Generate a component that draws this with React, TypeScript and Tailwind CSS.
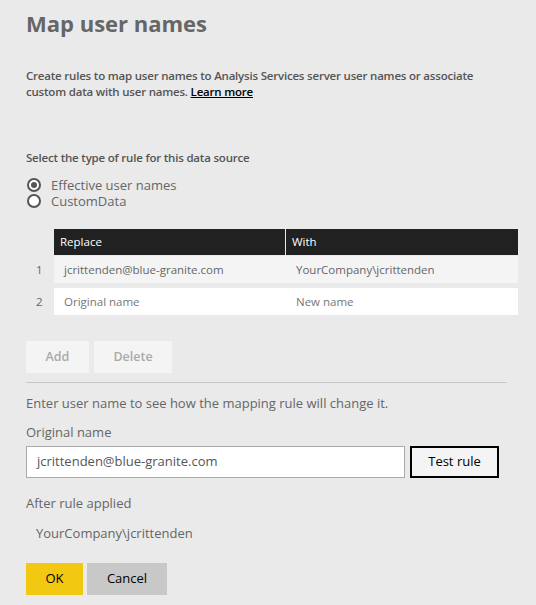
import React from "react";

const font = { fontFamily: '"Segoe UI", "Open Sans", "Noto Sans", sans-serif' };

function Radio({ checked, label }: { checked: boolean; label: string }) {
  return (
    <label className="flex items-center h-4 gap-[10px]">
      <span className="w-[14px] h-[14px] rounded-full border-2 border-[#555] bg-white flex items-center justify-center">
        {checked && <span className="w-[6px] h-[6px] rounded-full bg-[#555]" />}
      </span>
      <span className="text-[13px] text-[#666] leading-4">{label}</span>
    </label>
  );
}

export default function App() {
  return (
    <div style={font} className="w-[536px] h-[605px] bg-[#eaeaea] pl-[26px] pt-[7px] text-[#666]">
      <h1 className="text-[22px] font-bold leading-8 text-[#666]">Map user names</h1>
      <p className="mt-[29px] text-[11.5px] font-semibold leading-4 text-[#555] w-[468px] tracking-[-0.2px]">
        Create rules to map user names to Analysis Services server user names or associate custom data with user names.{" "}
        <a className="text-black underline">Learn more</a>
      </p>
      <p className="mt-[50px] text-[11.5px] font-semibold leading-4 text-[#555] tracking-[-0.2px]">Select the type of rule for this data source</p>
      <div className="mt-[11px] pl-[1px] flex flex-col">
        <Radio checked label="Effective user names" />
        <Radio checked={false} label="CustomData" />
      </div>

      <div className="mt-[20px] w-[492px] text-[11.5px]">
        <div className="ml-[28px] flex h-[26px] bg-[#212121] text-white">
          <div className="w-[232px] border-r border-[#e9e9e9] pl-[6px] flex items-center">Replace</div>
          <div className="flex-1 pl-[6px] flex items-center">With</div>
        </div>
        <div className="flex mt-[1px] h-[27px] items-center">
          <div className="w-[28px] pl-[10px] text-[#666]">1</div>
          <div className="flex-1 h-full flex items-center bg-[#f4f4f4] text-[#666]">
            <div className="w-[232px] pl-[10px]">jcrittenden@blue-granite.com</div>
            <div className="flex-1 pl-[10px]">YourCompany\jcrittenden</div>
          </div>
        </div>
        <div className="flex mt-[5px] h-[27px] items-center">
          <div className="w-[28px] pl-[10px] text-[#666]">2</div>
          <div className="flex-1 h-full flex items-center bg-white text-[#777]">
            <div className="w-[232px] pl-[10px]">Original name</div>
            <div className="flex-1 pl-[10px]">New name</div>
          </div>
        </div>
      </div>

      <div className="mt-[26px] flex gap-[5px]">
        <button className="w-[63px] h-[32px] bg-[#f4f4f4] text-[12.5px] font-semibold text-[#aaa]">Add</button>
        <button className="w-[78px] h-[32px] bg-[#f4f4f4] text-[12.5px] font-semibold text-[#aaa]">Delete</button>
      </div>

      <div className="mt-[9px] w-[481px] h-px bg-[#c8c8c8]" />

      <p className="mt-[10px] text-[13px] leading-5 text-[#666]">Enter user name to see how the mapping rule will change it.</p>
      <p className="mt-[9px] text-[13px] leading-5 text-[#666]">Original name</p>
      <div className="mt-[4px] flex gap-[5px]">
        <div className="w-[379px] h-[32px] bg-white border border-[#aaa] pl-[10px] flex items-center text-[13px] text-[#555]">
          jcrittenden@blue-granite.com
        </div>
        <button className="w-[89px] h-[32px] bg-[#f4f4f4] border-2 border-black text-[13px] font-medium text-black">Test rule</button>
      </div>
      <p className="mt-[15px] text-[13px] leading-5 text-[#666]">After rule applied</p>
      <p className="mt-[10px] pl-[10px] text-[13px] leading-5 text-[#666]">YourCompany\jcrittenden</p>
      <div className="mt-[20px] flex gap-[4px]">
        <button className="w-[57px] h-[32px] bg-[#f2c811] text-[13px] font-medium text-black">OK</button>
        <button className="w-[80px] h-[32px] bg-[#c8c8c8] text-[13px] font-medium text-black">Cancel</button>
      </div>
    </div>
  );
}
